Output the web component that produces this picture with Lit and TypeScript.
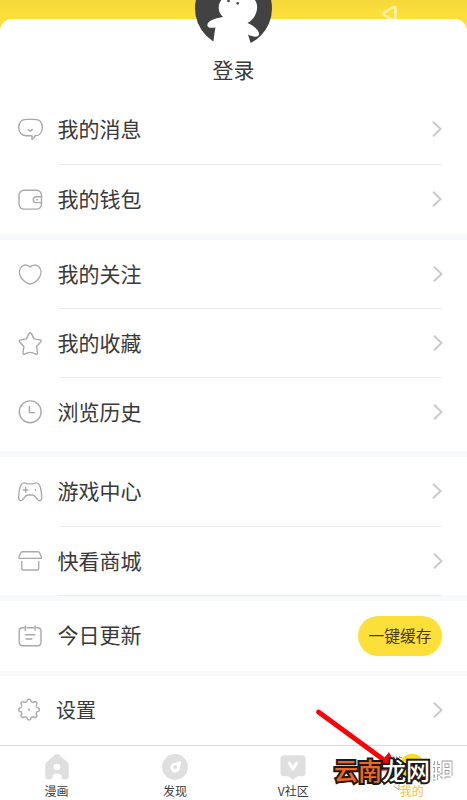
import { LitElement, html, css, svg, nothing } from "lit";
import { customElement } from "lit/decorators.js";

const gearOutline = (cx: number, cy: number) => {
  const points: string[] = [];
  for (let i = 0; i < 160; i++) {
    const a = (i / 160) * Math.PI * 2;
    const r = 9.2 + 1.15 * Math.tanh(1.8 * Math.cos(8 * a));
    points.push(`${(cx + r * Math.cos(a)).toFixed(2)} ${(cy + r * Math.sin(a)).toFixed(2)}`);
  }
  return `M${points.join("L")}z`;
};

const icons: Record<string, unknown> = {
  message: svg`<path d="M10.500 3.400h8c5 0 7.800 3.200 7.800 8s-2.600 8.400-7.300 8.400c-.5 2-1.600 3-3 3.600v-3.600H10.500c-4.800 0-7.700-3.300-7.700-8.300s2.900-8.100 7.700-8.100z"/><path d="M12.200 13.600q2 2.800 4 0"/>`,
  wallet: svg`<rect x="3" y="4.300" width="22.500" height="18.800" rx="5"/><path d="M25.500 10.800h-5.300a2.900 2.900 0 0 0 0 5.800h5.300M20.600 13.700h.8"/>`,
  heart: svg`<path d="M14.200 6C12 3.600 8.200 3.400 5.800 5.600C3.200 8.100 2.700 12.300 4.700 15.800c2 3.500 6.200 7.200 9.500 7.200s7.500-3.700 9.500-7.200c2-3.500 1.500-7.700-1.100-10.200C20.200 3.400 16.400 3.600 14.200 6z"/>`,
  star: svg`<path d="M12.900 3.600q1.300-2 2.600 0l2.500 5.300 6 1q1.900.5.700 2.100l-4.200 4.400 1 6.500q-.1 1.800-1.900 1.300q-2.700-1.800-5.400-1.800t-5.400 1.800q-1.800.5-1.900-1.300l1-6.500-4.200-4.400q-1.200-1.600.7-2.100l6-1z"/>`,
  clock: svg`<circle cx="14.200" cy="12.800" r="10.900"/><path d="M13.500 7.400v6.200h5.200"/>`,
  game: svg`<path d="M7.700 4.900c2 0 2.500 1 3.800 1h5.400c1.300 0 1.800-1 3.800-1c3.800 0 5.200 10 5 15.200c0 2.800-2.200 3.500-4 1.500c-1.700-2-3-4.600-5.300-4.600h-4.400c-2.300 0-3.600 2.600-5.300 4.600c-1.800 2-4 1.300-4-1.500c-.2-5.200 1.200-15.200 5-15.200z"/><path d="M9.600 9.700v4.600M7.300 12h4.600M19.500 11.400v1.200"/>`,
  shop: svg`<path d="M6.400 4.700h15.600q1.200 0 1.600 1.100l1.800 4.300q.4 1.300-1 1.300H4q-1.400 0-1-1.300l1.800-4.300q.4-1.100 1.600-1.100zM5.700 14.500v6.900q0 1.600 1.600 1.600h13.800q1.600 0 1.600-1.600v-6.900"/>`,
  calendar: svg`<path d="M7 5.700H8M11 5.700h6.600M20.700 5.700h.8q3.500 0 3.500 3.500v11q0 3.500-3.500 3.500h-15Q3.200 23.700 3.200 20.200v-11q0-3.500 3.500-3.500M9.300 4v4.200M19.100 4v4.200M9.300 12.800h9.500M10 17h5.800"/>`,
  gear: svg`<path d="${gearOutline(13, 12.6)}"/><circle cx="13" cy="12.600" r=".5"/>`,
};

interface Row {
  icon: string;
  label: string;
  button?: string;
  kind?: string;
  shift?: boolean;
}

const groups: { name: string; rows: Row[] }[] = [
  { name: "account", rows: [{ icon: "message", label: "我的消息" }, { icon: "wallet", label: "我的钱包" }] },
  {
    name: "library",
    rows: [
      { icon: "heart", label: "我的关注", shift: true },
      { icon: "star", label: "我的收藏", shift: true },
      { icon: "clock", label: "浏览历史", shift: true },
    ],
  },
  { name: "extras", rows: [{ icon: "game", label: "游戏中心" }, { icon: "shop", label: "快看商城", shift: true }] },
  { name: "update", rows: [{ icon: "calendar", label: "今日更新", button: "一键缓存" }] },
  { name: "settings", rows: [{ icon: "gear", label: "设置", kind: "small", shift: true }] },
];

@customElement("menu-row")
class MenuRow extends LitElement {
  static properties = { row: { attribute: false } };
  declare row: Row;

  static styles = css`
    :host {
      display: flex;
      height: var(--row, 69px);
      padding-left: 16px;
      color: #393939;
    }
    .icon {
      align-self: center;
      width: 28px;
      height: 28px;
      margin-right: 14px;
      fill: none;
      stroke: #a9a9a9;
      stroke-width: 1.4;
      stroke-linecap: round;
      stroke-linejoin: round;
    }
    .body {
      flex: 1;
      display: flex;
      align-items: center;
      justify-content: space-between;
      margin-right: 25px;
      box-sizing: border-box;
      border-bottom: 1px solid var(--line, #ededed);
      padding-bottom: var(--lift, 0px);
    }
    .label {
      font-size: 21px;
      line-height: 30px;
      margin-left: -0.5px;
      padding-bottom: 2px;
    }
    .small {
      font-size: 20px;
      margin-left: -2px;
      padding-bottom: 0;
    }
    .chevron {
      width: 11px;
      height: 18px;
      fill: none;
      stroke: #c9c9c9;
      stroke-width: 1.9;
    }
    .shift {
      margin-right: -1px;
    }
    .button {
      width: 84px;
      height: 40px;
      border: 0;
      padding: 0;
      border-radius: 20px;
      background: #fddf39;
      color: #4b3709;
      font: inherit;
      font-size: 15.8px;
      margin-top: 1px;
    }
  `;

  render() {
    const { icon, label, button, kind, shift } = this.row;
    return html`
      <svg class="icon" viewBox="0 0 28 28">${icons[icon]}</svg>
      <div class="body">
        <span class="label ${kind ?? ""}">${label}</span>
        ${button
          ? html`<button class="button">${button}</button>`
          : html`<svg class="chevron ${shift ? "shift" : ""}" viewBox="0 0 11 18"><path d="M2 1.800l7.500 7.200L2 16.200" /></svg>`}
      </div>
    `;
  }
}

@customElement("app-root")
class AppRoot extends LitElement {
  static styles = css`
    :host {
      display: flex;
      flex-direction: column;
      position: relative;
      width: 467px;
      height: 800px;
      overflow: hidden;
      background: linear-gradient(#f4d83a, #fddf3b 14px);
      font-family: "Noto Sans CJK SC", sans-serif;
      color: #393939;
    }
    .sheet {
      margin-top: 19px;
      height: 726px;
      background: #fff;
      border-radius: 12px 12px 0 0;
    }
    .profile {
      height: 76px;
      display: flex;
      justify-content: center;
      align-items: flex-end;
    }
    .login {
      font-size: 21px;
      line-height: 30px;
      margin-bottom: 11px;
    }
    .avatar {
      position: absolute;
      left: 194px;
      top: 0;
    }
    .spark {
      position: absolute;
      left: 380px;
      top: 4px;
    }
    .group {
      box-sizing: border-box;
      border-bottom: 6px solid #f8f9fb;
    }
    .account {
      height: 145px;
      --row: 70px;
      --lift: 1px;
    }
    .library { height: 217px; }
    .extras {
      height: 144px;
      --row: 69.5px;
    }
    .update {
      height: 75px;
      border-bottom-width: 5px;
    }
    .settings {
      height: 69px;
      border: 0;
      --lift: 1px;
    }
    .last { --line: transparent; }
    .extras .last { --line: #ededed; }
    .nav {
      flex: 1;
      display: flex;
      background: #fff;
      border-top: 1px solid #d9d9d9;
    }
    .tab {
      width: 118.4px;
      display: flex;
      flex-direction: column;
      align-items: center;
      font-size: 12px;
      line-height: 14px;
      flex-shrink: 0;
    }
    .tab:first-child {
      margin-left: -2.7px;
    }
    .glyph {
      width: 28px;
      height: 28px;
      margin: 7px 0 3px;
    }
    .active {
      color: #fbbe35;
    }
    .arrow {
      position: absolute;
      left: 310px;
      top: 700px;
    }
    .mark {
      position: absolute;
      left: 334px;
      top: 758px;
      font-size: 24px;
      line-height: 24px;
      font-weight: 500;
      white-space: nowrap;
      color: #fff;
      -webkit-text-stroke: 4px #1c1a1a;
      paint-order: stroke fill;
    }
    .orange {
      color: #f26522;
    }
    .fragment {
      position: absolute;
      left: 389px;
      top: 750px;
    }
  `;

  render() {
    return html`
      <main class="sheet">
        <div class="profile"><span class="login">登录</span></div>
        ${groups.map(
          (g) => html`<section class="group ${g.name}">
            ${g.rows.map(
              (r, i) => html`<menu-row class=${i === g.rows.length - 1 ? "last" : nothing} .row=${r}></menu-row>`
            )}
          </section>`
        )}
      </main>
      <nav class="nav">
        <div class="tab">
          <svg class="glyph" viewBox="0 0 28 28">
            <path d="M12.200 1.700q1.800-1.400 3.600 0l8.200 7q1.700 1.500 1.700 3.600v11.300q0 2.600-2.600 2.600h-2.600q-2 0-2-2v-.8q0-3-4.500-3t-4.500 3v.8q0 2-2 2H4.900q-2.600 0-2.600-2.600V12.300q0-2.100 1.700-3.600z" fill="#dfdfdf" />
            <circle cx="14" cy="14" r="3.300" fill="#fff" />
          </svg>漫画
        </div>
        <div class="tab">
          <svg class="glyph" viewBox="0 0 28 28">
            <circle cx="14" cy="14" r="12.900" fill="#dfdfdf" />
            <path d="M20.500 8l-1.800 8.200a4.800 4.800 0 1 1-6-6z" fill="#fff" />
            <circle cx="14.200" cy="14" r="2" fill="#dfdfdf" />
          </svg>发现
        </div>
        <div class="tab">
          <svg class="glyph" viewBox="0 0 28 28">
            <path d="M5 2.200h18q3.500 0 3.500 3.500v14q0 3.500-3.500 3.500h-4.500L14 26.700l-4.500-3.500H5q-3.500 0-3.500-3.500v-14q0-3.500 3.500-3.500z" fill="#dfdfdf" />
            <path d="M10.500 10.200l3.500 6 3.500-6" fill="none" stroke="#fff" stroke-width="3" stroke-linecap="round" stroke-linejoin="round" />
          </svg>V社区
        </div>
        <div class="tab active">
          <svg class="glyph" viewBox="0 0 28 28"><circle cx="14" cy="13.500" r="12.800" fill="#fddb1e" /></svg>我的
        </div>
      </nav>
      <svg class="avatar" width="80" height="50" viewBox="0 0 80 50">
        <circle cx="39.500" cy="8.500" r="38.500" fill="#424242" />
        <path d="M28-1C23 5 24 13 29 17C22 18 12 21 13.500 26C15 28.500 18 27.800 21.500 27.500Q20.500 32 19.500 41V50H58L56.500 42.500L54 34.500C59 37 64 37.800 65 34.500C66 31 59 25 53.500 23C63 18 66 5 60-1z" fill="#fff" />
        <g fill="#424242"><circle cx="34.500" cy="1" r="1.300" /><circle cx="43.700" cy="3.200" r="1.300" /></g>
      </svg>
      <svg class="spark" width="20" height="15" viewBox="0 0 20 15" fill="none" stroke="#fff1a5" stroke-width="2.500" stroke-linejoin="round">
        <path d="M13 16L4 11Q2.500 10 4 8.800L12.500 3.500Q15.500 2 15.500 5V16" />
      </svg>
      <svg class="arrow" width="90" height="75" viewBox="0 0 90 75">
        <path d="M8.500 12L74 60" stroke="#fb0007" stroke-width="4.800" stroke-linecap="round" />
        <path d="M79 52L64 71L88 70z" fill="#fb0007" />
      </svg>
      <svg class="fragment" width="66" height="42" viewBox="0 0 66 42" fill="none">
        <g stroke="#999" stroke-width="3.800">
          <path d="M6 9V6.500M9 6V14M5 9h8M8.500 28V37l-3-2" />
          <path d="M47 11V30M44 16h7M44 23.500h7M44 28.500h3M54.500 29V12.500H61.500V26M54 19h7.500M51 25.500h10.500" />
        </g>
        <g stroke="#fff" stroke-width="2.200">
          <path d="M6 9V6.500M9 6V14M5 9h8M8.500 28V37l-3-2" />
          <path d="M47 11V30M44 16h7M44 23.500h7M44 28.500h3M54.500 29V12.500H61.500V26M54 19h7.500M51 25.500h10.500" />
        </g>
      </svg>
      <div class="mark"><span class="orange">云南</span>龙网</div>
    `;
  }
}
